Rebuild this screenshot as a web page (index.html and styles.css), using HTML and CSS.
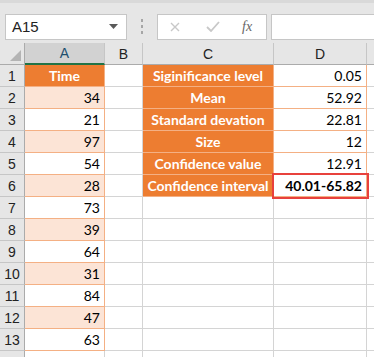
FILE: index.html
```html
<!DOCTYPE html>
<html>
<head>
    <title>Confidence interval</title>
    <link rel="stylesheet" href="styles.css">
</head>
<body>

<div class="formula-bar">
    <div class="name-box">
        <span>A15</span>
        <svg class="caret" width="9" height="5" viewBox="0 0 9 5"><path d="M0 0 H9 L4.5 5 Z" fill="#595959"/></svg>
    </div>
    <div class="grip"><i></i><i></i><i></i></div>
    <div class="fx-box">
        <svg width="10" height="10" viewBox="0 0 10 10"><path d="M1 1 L9 9 M9 1 L1 9" stroke="#c8c8c8" stroke-width="1.4"/></svg>
        <svg width="14" height="11" viewBox="0 0 14 11"><path d="M1 6 L5 10 L13 1" stroke="#c8c8c8" stroke-width="1.8" fill="none"/></svg>
        <span class="fx">fx</span>
    </div>
    <div class="input-box"></div>
</div>

<div class="sheet">
    <div class="hd corner"><span class="tri"></span></div>
    <div class="hd col sel">A</div>
    <div class="hd col">B</div>
    <div class="hd col">C</div>
    <div class="hd col">D</div>
    <div class="hd col"></div>

    <div class="rh">1</div>
    <div class="c head">Time</div>
    <div class="c"></div>
    <div class="c lbl">Siginificance level</div>
    <div class="c val">0.05</div>
    <div class="c"></div>

    <div class="rh">2</div>
    <div class="c num alt">34</div>
    <div class="c"></div>
    <div class="c lbl">Mean</div>
    <div class="c val">52.92</div>
    <div class="c"></div>

    <div class="rh">3</div>
    <div class="c num">21</div>
    <div class="c"></div>
    <div class="c lbl">Standard devation</div>
    <div class="c val">22.81</div>
    <div class="c"></div>

    <div class="rh">4</div>
    <div class="c num alt">97</div>
    <div class="c"></div>
    <div class="c lbl">Size</div>
    <div class="c val">12</div>
    <div class="c"></div>

    <div class="rh">5</div>
    <div class="c num">54</div>
    <div class="c"></div>
    <div class="c lbl">Confidence value</div>
    <div class="c val">12.91</div>
    <div class="c"></div>

    <div class="rh">6</div>
    <div class="c num alt">28</div>
    <div class="c"></div>
    <div class="c lbl">Confidence interval</div>
    <div class="c val result">40.01-65.82</div>
    <div class="c"></div>

    <div class="rh">7</div>
    <div class="c num">73</div>
    <div class="c"></div><div class="c"></div><div class="c"></div><div class="c"></div>

    <div class="rh">8</div>
    <div class="c num alt">39</div>
    <div class="c"></div><div class="c"></div><div class="c"></div><div class="c"></div>

    <div class="rh">9</div>
    <div class="c num">64</div>
    <div class="c"></div><div class="c"></div><div class="c"></div><div class="c"></div>

    <div class="rh">10</div>
    <div class="c num alt">31</div>
    <div class="c"></div><div class="c"></div><div class="c"></div><div class="c"></div>

    <div class="rh">11</div>
    <div class="c num">84</div>
    <div class="c"></div><div class="c"></div><div class="c"></div><div class="c"></div>

    <div class="rh">12</div>
    <div class="c num alt">47</div>
    <div class="c"></div><div class="c"></div><div class="c"></div><div class="c"></div>

    <div class="rh">13</div>
    <div class="c num">63</div>
    <div class="c"></div><div class="c"></div><div class="c"></div><div class="c"></div>

    <div class="rh"></div>
    <div class="c"></div>
    <div class="c"></div><div class="c"></div><div class="c"></div><div class="c"></div>
</div>

</body>
</html>
```

FILE: styles.css
```css
/* excel jaisa look */
body { margin: 0; background: #fff; font-family: Lato, "Liberation Sans", sans-serif; font-size: 14px; color: #000; overflow: hidden; }

.formula-bar {
    display: flex; align-items: center; height: 43px;
    background: #e6e6e6; border-top: 3px solid #d9d9d9; box-sizing: border-box;
    padding: 7px 0 0 5px;
}
.name-box {
    width: 122px; height: 26px; box-sizing: border-box;
    background: #fff; border: 1px solid #c6c6c6;
    display: flex; align-items: center; justify-content: space-between;
    padding: 0 8px 0 6px; font-family: "Liberation Sans", sans-serif; font-size: 15px; color: #222;
}
.grip { width: 30px; display: flex; flex-direction: column; align-items: center; gap: 3px; }
.grip i { width: 2px; height: 3px; background: #a6a6a6; display: block; }
.fx-box {
    width: 110px; height: 26px; box-sizing: border-box;
    background: #fff; border: 1px solid #c6c6c6;
    display: flex; align-items: center; padding-left: 12px;
}
.fx-box svg:nth-child(2) { margin-left: 26px; }
.fx { font-family: "Liberation Serif", serif; font-style: italic; font-size: 14px; color: #666; margin-left: 22px; }
.input-box { flex: 1; height: 26px; margin-left: 4px; box-sizing: border-box; background: #fff; border: 1px solid #c6c6c6; border-right: 0; }

.sheet {
    display: grid;
    grid-template-columns: 25px 80px 38px 131px 93px 1fr;
    grid-auto-rows: 22px;
}
.hd {
    background: #e6e6e6; border-right: 1px solid #ababab; border-bottom: 1px solid #ababab;
    display: flex; align-items: center; justify-content: center;
    font-family: "Liberation Sans", sans-serif; font-size: 14px; color: #222;
}
.col { border-right-color: #c6c6c6; }
.col.sel { background: #d2d2d2; color: #1e4e6e; border-bottom: 2px solid #217346; }
.corner { position: relative; }
.tri {
    position: absolute; right: 3px; bottom: 3px; width: 0; height: 0;
    border-left: 11px solid transparent; border-bottom: 11px solid #b4b4b4;
}

.rh {
    background: #e6e6e6; border-right: 1px solid #ababab; border-bottom: 1px solid #c6c6c6;
    display: flex; align-items: center; justify-content: center;
    font-family: "Liberation Sans", sans-serif; font-size: 14px; color: #222;
}
.c {
    border-right: 1px solid #d4d4d4; border-bottom: 1px solid #d4d4d4;
    display: flex; align-items: center; padding: 0 4px; white-space: nowrap;
    min-width: 0;
}
.head { background: #ed7d31; color: #fff; font-weight: bold; justify-content: center; border-color: #f4b084; }
.num { justify-content: flex-end; border-right-color: #f4b084; border-bottom-color: #f4b084; }
.num.alt { background: #fce4d6; }
.lbl { background: #ed7d31; color: #fff; font-weight: bold; justify-content: center; border-color: #f4b084; }
.val { justify-content: flex-end; border-color: #f4b084; }
.result { font-weight: bold; outline: 2px solid #e8413c; outline-offset: 0; position: relative; z-index: 1; }
```
